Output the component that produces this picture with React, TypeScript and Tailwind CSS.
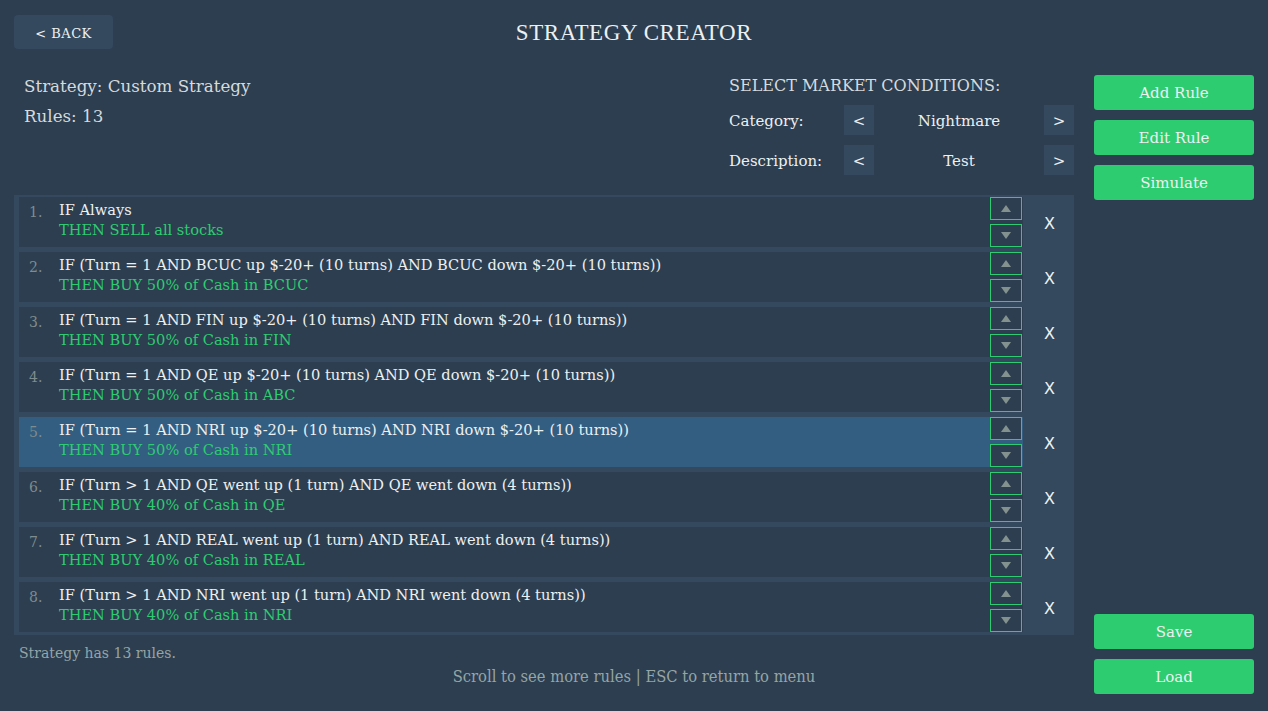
import React from "react";

type Rule = { cond: string; action: string };

const rules: Rule[] = [
  { cond: "IF Always", action: "THEN SELL all stocks" },
  {
    cond: "IF (Turn = 1 AND BCUC up $-20+ (10 turns) AND BCUC down $-20+ (10 turns))",
    action: "THEN BUY 50% of Cash in BCUC",
  },
  {
    cond: "IF (Turn = 1 AND FIN up $-20+ (10 turns) AND FIN down $-20+ (10 turns))",
    action: "THEN BUY 50% of Cash in FIN",
  },
  {
    cond: "IF (Turn = 1 AND QE up $-20+ (10 turns) AND QE down $-20+ (10 turns))",
    action: "THEN BUY 50% of Cash in ABC",
  },
  {
    cond: "IF (Turn = 1 AND NRI up $-20+ (10 turns) AND NRI down $-20+ (10 turns))",
    action: "THEN BUY 50% of Cash in NRI",
  },
  {
    cond: "IF (Turn > 1 AND QE went up (1 turn) AND QE went down (4 turns))",
    action: "THEN BUY 40% of Cash in QE",
  },
  {
    cond: "IF (Turn > 1 AND REAL went up (1 turn) AND REAL went down (4 turns))",
    action: "THEN BUY 40% of Cash in REAL",
  },
  {
    cond: "IF (Turn > 1 AND NRI went up (1 turn) AND NRI went down (4 turns))",
    action: "THEN BUY 40% of Cash in NRI",
  },
];

const serif = "font-['DejaVu_Serif','Liberation_Serif',serif]";

function ArrowBox({ up }: { up: boolean }) {
  return (
    <div className="w-[32px] h-[23px] border border-[#2ecc71] bg-[#2c3e50] flex items-center justify-center">
      <svg width="12" height="9" viewBox="0 0 12 9">
        {up ? (
          <polygon points="6,1 11,8 1,8" fill="#84928f" />
        ) : (
          <polygon points="1,1 11,1 6,8" fill="#84928f" />
        )}
      </svg>
    </div>
  );
}

function RuleRow({ rule, index, selected }: { rule: Rule; index: number; selected: boolean }) {
  return (
    <div className="flex h-[50px]">
      <div
        className={`w-[1004px] flex relative ${selected ? "bg-[#335e82]" : "bg-[#2c3e50]"}`}
      >
        <div className="w-[40px] pl-[10px] pt-[5px] text-[14px] text-[#7f8c8d]">{index + 1}.</div>
        <div className="pt-[3px] text-[14.6px] leading-[20px]">
          <div className="text-[#ecf0f1]">{rule.cond}</div>
          <div className="text-[#2ecc71]">{rule.action}</div>
        </div>
        <div className="absolute right-[1px] top-0 flex flex-col gap-[4px]">
          <ArrowBox up />
          <ArrowBox up={false} />
        </div>
      </div>
      <div className="flex-1 flex items-center justify-center pt-[3px] pl-[2px] text-[16px] text-[#ecf0f1] font-['DejaVu_Sans',sans-serif]">
        X
      </div>
    </div>
  );
}

function GreenButton({ label }: { label: string }) {
  return (
    <button className="w-[160px] h-[35px] pt-[2px] rounded-[3px] bg-[#2ecc71] text-[#ecf0f1] text-[15px]">
      {label}
    </button>
  );
}

function Selector({ label, value }: { label: string; value: string }) {
  return (
    <div className="flex items-center h-[30px]">
      <div className="w-[115px] pt-[3px] text-[15px] text-[#ecf0f1]">{label}</div>
      <div className="w-[30px] h-[30px] bg-[#34495e] flex items-center justify-center pt-[2px] text-[15px] text-[#ecf0f1]">
        &lt;
      </div>
      <div className="w-[170px] pt-[3px] text-center text-[15px] text-[#ecf0f1]">{value}</div>
      <div className="w-[30px] h-[30px] bg-[#34495e] flex items-center justify-center pt-[2px] text-[15px] text-[#ecf0f1]">
        &gt;
      </div>
    </div>
  );
}

export default function App() {
  return (
    <div className={`w-[1268px] h-[711px] bg-[#2c3e50] ${serif} overflow-hidden flex flex-col`}>
      {/* header */}
      <div className="relative h-[64px] flex items-start">
        <button className="ml-[14px] mt-[15px] w-[99px] h-[34px] pt-[3px] rounded-[4px] bg-[#34495e] text-[#ecf0f1] text-[13px] tracking-[0.5px]">
          &lt; BACK
        </button>
        <div className="absolute left-0 right-0 top-[20px] text-center text-[23px] leading-[26px] text-[#ecf0f1] font-['Liberation_Serif',serif] tracking-[0.6px]">
          STRATEGY CREATOR
        </div>
      </div>

      <div className="flex flex-1">
        {/* main column */}
        <div className="w-[1074px] flex flex-col">
          <div className="h-[131px] flex justify-between">
            <div className="pl-[24px] pt-[10px] text-[16.7px] text-[#d5dadd] leading-[24px]">
              <div>Strategy: Custom Strategy</div>
              <div className="mt-[6px]">Rules: 13</div>
            </div>
            <div className="pt-[11px] w-[345px]">
              <div className="text-[16px] text-[#d5dadd] leading-[22px]">
                SELECT MARKET CONDITIONS:
              </div>
              <div className="mt-[8px] flex flex-col gap-[10px]">
                <Selector label="Category:" value="Nightmare" />
                <Selector label="Description:" value="Test" />
              </div>
            </div>
          </div>

          <div className="ml-[14px] w-[1060px] h-[440px] bg-[#34495e] pt-[2px] pl-[5px] flex flex-col gap-[5px]">
            {rules.map((r, i) => (
              <RuleRow key={i} rule={r} index={i} selected={i === 4} />
            ))}
          </div>

          <div className="pl-[19px] pt-[8px] text-[14px] text-[#95a5a6]">Strategy has 13 rules.</div>
          <div className="pl-[194px] mt-[1px] text-center text-[16.4px] text-[#95a5a6] font-['DejaVu_Serif_Condensed','DejaVu_Serif',serif] [font-stretch:condensed]">
            Scroll to see more rules | ESC to return to menu
          </div>
        </div>

        {/* right column */}
        <div className="ml-[20px] flex flex-col pt-[11px] pb-[17px]">
          <div className="flex flex-col gap-[10px]">
            <GreenButton label="Add Rule" />
            <GreenButton label="Edit Rule" />
            <GreenButton label="Simulate" />
          </div>
          <div className="mt-auto flex flex-col gap-[10px]">
            <GreenButton label="Save" />
            <GreenButton label="Load" />
          </div>
        </div>
      </div>
    </div>
  );
}
